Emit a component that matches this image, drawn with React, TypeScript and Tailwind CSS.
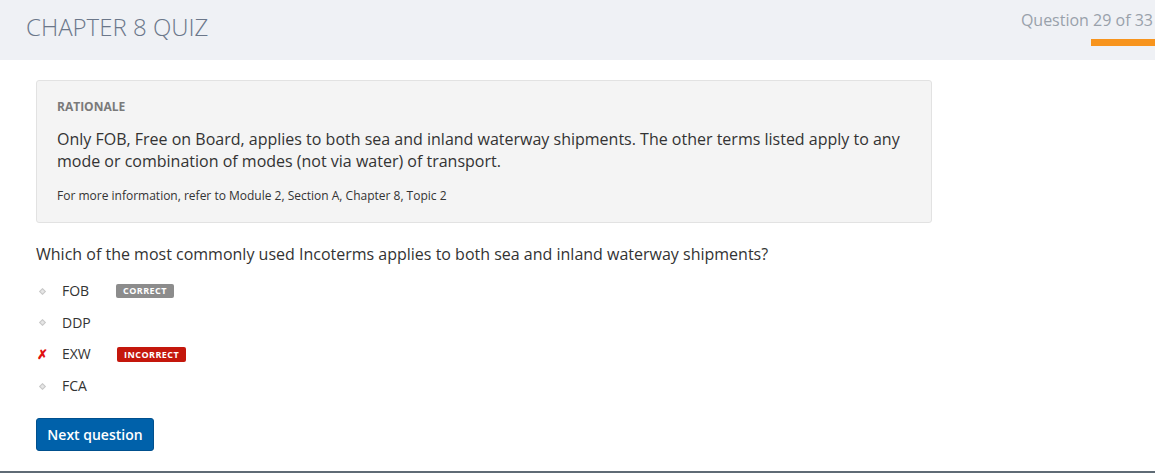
const options = [
  { label: 'FOB', mark: 'none', badge: 'correct' },
  { label: 'DDP', mark: 'none', badge: null },
  { label: 'EXW', mark: 'wrong', badge: 'incorrect' },
  { label: 'FCA', mark: 'none', badge: null },
] as const;

function Bullet({ mark }: { mark: 'none' | 'wrong' }) {
  if (mark === 'wrong') {
    return <span className="w-[26px] pl-[1px] text-[13px] font-bold leading-none text-[#e01010]">✗</span>;
  }
  return (
    <span className="flex w-[26px] items-center pl-[4px]">
      <span className="h-[5px] w-[5px] rotate-45 border border-[#c8c8c8] bg-[#e6e6e6]" />
    </span>
  );
}

function Badge({ kind }: { kind: 'correct' | 'incorrect' }) {
  if (kind === 'correct') {
    return (
      <span className="ml-[26px] rounded-[2px] bg-[#8c8c8c] px-[7px] py-[2px] text-[9px] font-bold leading-[10px] tracking-[0.05em] text-white">
        CORRECT
      </span>
    );
  }
  return (
    <span className="ml-[27px] rounded-[2px] bg-[#c4170c] px-[7px] py-[2px] text-[9px] font-bold leading-[11px] tracking-[0.05em] text-white">
      INCORRECT
    </span>
  );
}

export default function App() {
  return (
    <div className="flex h-[473px] flex-col bg-white font-['Open_Sans',sans-serif]">
      <header className="flex h-[60px] shrink-0 items-start justify-between bg-[#eff1f5]">
        <h1 className="pl-[26px] pt-[10px] text-[24px] font-light leading-[34px] text-[#6b778a]">CHAPTER 8 QUIZ</h1>
        <div className="flex flex-col items-end pt-[9px]">
          <span className="pr-[2px] text-[16px] leading-[22px] text-[#99a1ab]">Question 29 of 33</span>
          <span className="mt-[8px] h-[7px] w-[64px] bg-[#f7941d]" />
        </div>
      </header>

      <main className="flex-1 px-[36px] pt-[20px]">
        <section className="w-[896px] rounded-[3px] border border-[#e2e2e2] bg-[#f4f4f4] px-[20px] pb-[18px] pt-[18px]">
          <h2 className="text-[12px] font-bold leading-[16px] text-[#7a7a7a]">RATIONALE</h2>
          <p className="mt-[13px] text-[16px] leading-[22px] text-[#333]">
            Only FOB, Free on Board, applies to both sea and inland waterway shipments. The other terms listed apply to any
            mode or combination of modes (not via water) of transport.
          </p>
          <p className="mt-[16px] text-[12px] leading-[16px] text-[#333]">
            For more information, refer to Module 2, Section A, Chapter 8, Topic 2
          </p>
        </section>

        <p className="mt-[20px] text-[16px] leading-[22px] text-[#333]">
          Which of the most commonly used Incoterms applies to both sea and inland waterway shipments?
        </p>

        <ul className="mt-[16px] flex flex-col gap-[11.7px]">
          {options.map((o) => (
            <li key={o.label} className="flex h-[20px] items-center">
              <Bullet mark={o.mark === 'wrong' ? 'wrong' : 'none'} />
              <span className="w-[28px] text-[14px] leading-[20px] text-[#333]">{o.label}</span>
              {o.badge && <Badge kind={o.badge} />}
            </li>
          ))}
        </ul>

        <button className="mt-[22px] h-[33px] w-[118px] rounded-[3px] border border-[#00508e] bg-[#0061aa] text-[14px] font-semibold text-white">
          Next question
        </button>
      </main>

      <div className="h-[2px] shrink-0 bg-[#5f6b75]" />
    </div>
  );
}
